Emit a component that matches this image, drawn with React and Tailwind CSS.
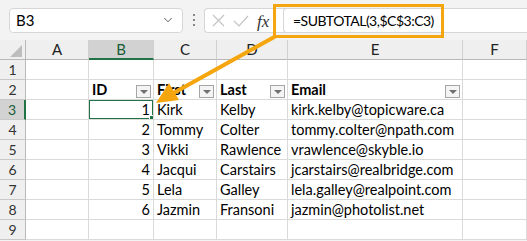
import { ChevronDown } from "lucide-react";

const cols = ["A", "B", "C", "D", "E", "F"];

const people = [
  [1, "Kirk", "Kelby", "kirk.kelby@topicware.ca"],
  [2, "Tommy", "Colter", "tommy.colter@npath.com"],
  [3, "Vikki", "Rawlence", "vrawlence@skyble.io"],
  [4, "Jacqui", "Carstairs", "jcarstairs@realbridge.com"],
  [5, "Lela", "Galley", "lela.galley@realpoint.com"],
  [6, "Jazmin", "Fransoni", "jazmin@photolist.net"],
];

const FilterButton = () => (
  <div className="absolute right-[2px] top-[5px] w-[15px] h-[13px] border border-[#a6a6a6] bg-[#f4f4f4] flex items-center justify-center">
    <div className="w-0 h-0 border-l-[4px] border-r-[4px] border-t-[4px] border-l-transparent border-r-transparent border-t-[#707070]" />
  </div>
);

const Cell = ({ children, className = "" }) => (
  <div
    className={`relative h-[20px] border-r border-b border-[#dadada] bg-white px-[3px] text-[14.5px] leading-[20px] whitespace-nowrap overflow-hidden ${className}`}
  >
    {children}
  </div>
);

const RowHead = ({ n, active }) => (
  <div
    className={`h-[20px] border-b border-[#c8c8c8] text-[14px] leading-[20px] text-center ${
      active
        ? "bg-[#d2d2d2] text-[#185c37] border-r-2 border-r-[#217346]"
        : "bg-[#efefef] text-[#333] border-r border-r-[#b8b8b8]"
    }`}
  >
    {n}
  </div>
);

export default function App() {
  const rows = [];
  for (let r = 1; r <= 9; r++) {
    const p = r >= 3 && r <= 8 ? people[r - 3] : null;
    rows.push(
      <RowHead key={`h${r}`} n={r} active={r === 3} />,
      <Cell key={`a${r}`} />,
      <Cell key={`b${r}`} className={r === 2 ? "font-bold" : "text-right"}>
        {r === 2 ? "ID" : p ? p[0] : ""}
        {r === 2 && <FilterButton />}
        {r === 3 && (
          <>
            <div className="absolute inset-[-1px] border-2 border-[#217346]" />
            <div className="absolute right-[-1px] bottom-[-1px] w-[5px] h-[5px] bg-[#217346] border border-white" />
          </>
        )}
      </Cell>,
      <Cell key={`c${r}`} className={r === 2 ? "font-bold" : ""}>
        {r === 2 ? "First" : p ? p[1] : ""}
        {r === 2 && <FilterButton />}
      </Cell>,
      <Cell key={`d${r}`} className={r === 2 ? "font-bold" : ""}>
        {r === 2 ? "Last" : p ? p[2] : ""}
        {r === 2 && <FilterButton />}
      </Cell>,
      <Cell key={`e${r}`} className={r === 2 ? "font-bold" : ""}>
        {r === 2 ? "Email" : p ? p[3] : ""}
        {r === 2 && <FilterButton />}
      </Cell>,
      <Cell key={`f${r}`} />
    );
  }

  return (
    <div className="relative w-[527px] h-[241px] overflow-hidden bg-[#f3f3f3] font-['Lato',sans-serif] text-black">
      {/* Formula bar */}
      <div className="flex items-center h-[40px]">
        <div className="ml-[9px] w-[174px] h-[25px] bg-white border border-[#d6d6d6] rounded-[4px] flex items-center justify-between pl-[6px] pr-[7px]">
          <span className="text-[15px]">B3</span>
          <ChevronDown size={14} strokeWidth={1.5} className="text-[#444]" />
        </div>
        <div className="w-[21px] flex flex-col items-center gap-[3px]">
          <div className="w-[2px] h-[2px] bg-[#888]" />
          <div className="w-[2px] h-[2px] bg-[#888]" />
          <div className="w-[2px] h-[2px] bg-[#888]" />
        </div>
        <div className="flex-1 h-[25px] flex items-center bg-white border border-[#d6d6d6] rounded-l-[4px] border-r-0">
          <svg width="78" height="23" viewBox="0 0 78 23" className="shrink-0">
            <path d="M8 6 L19 17 M19 6 L8 17" stroke="#c4c4c4" strokeWidth="1.2" fill="none" />
            <path d="M29 12 L34 17 L43 7" stroke="#c4c4c4" strokeWidth="1.2" fill="none" />
          </svg>
          <span className="absolute left-[257px] top-[9px] italic font-['Liberation_Serif',serif] text-[17px] text-[#333]">
            fx
          </span>
          <div className="flex-1 h-[25px] -my-px bg-white border border-[#d6d6d6] rounded-l-[4px] border-r-0 flex items-center pl-[9px]">
            <span className="text-[14px] tracking-[-0.5px]">=SUBTOTAL(3,$C$3:C3)</span>
          </div>
        </div>
      </div>

      {/* Grid */}
      <div className="grid grid-cols-[26px_63px_65px_63px_71px_175px_64px]">
        <div className="relative h-[20px] bg-[#efefef] border-r border-b border-[#b8b8b8]">
          <svg className="absolute right-[3px] bottom-[2px]" width="12" height="12">
            <polygon points="12,0 12,12 0,12" fill="#bdbdbd" />
          </svg>
        </div>
        {cols.map((c) => (
          <div
            key={c}
            className={`h-[20px] text-[15px] leading-[19px] text-center border-r border-[#d0d0d0] ${
              c === "B"
                ? "bg-[#d2d2d2] text-[#185c37] border-b-2 border-b-[#217346]"
                : "bg-[#efefef] text-[#222] border-b border-b-[#b8b8b8]"
            }`}
          >
            {c}
          </div>
        ))}
        {rows}
      </div>

      {/* Callout */}
      <div className="absolute left-[273px] top-[4px] w-[171px] h-[34px] border-[3px] border-[#f5a50e]" />
      <svg className="absolute left-0 top-0 pointer-events-none" width="527" height="241">
        <line x1="276" y1="36" x2="170" y2="95" stroke="#f5a50e" strokeWidth="4" />
        <polygon points="156,103 179,100 169,83" fill="#f5a50e" />
      </svg>
    </div>
  );
}
